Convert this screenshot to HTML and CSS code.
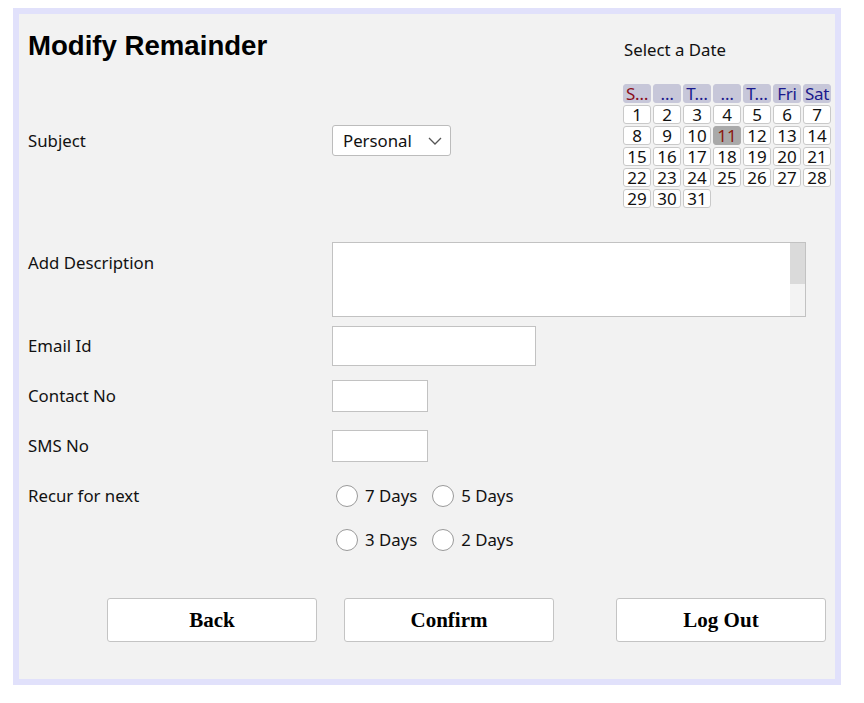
FILE: index.html
```html
<!DOCTYPE html>
<html>
<head>
<meta charset="utf-8">
<title>Modify Remainder</title>
<link rel="stylesheet" href="styles.css">
</head>
<body>
<div class="frame">
  <div class="top">
    <div class="top-left">
      <h1 class="title">Modify Remainder</h1>
      <div class="row row-subject">
        <label class="label">Subject</label>
        <div class="select-wrap">
          <select class="select"><option>Personal</option><option>Official</option></select>
          <svg class="chev" width="14" height="8" viewBox="0 0 14 8"><path d="M1 1 L7 7 L13 1" fill="none" stroke="#555" stroke-width="1.3"/></svg>
        </div>
      </div>
    </div>
    <div class="top-right">
      <div class="cal-title">Select a Date</div>
      <div class="cal">
        <div class="hd sun">S…</div><div class="hd">…</div><div class="hd">T…</div><div class="hd">…</div><div class="hd">T…</div><div class="hd">Fri</div><div class="hd">Sat</div>
        <div class="d">1</div><div class="d">2</div><div class="d">3</div><div class="d">4</div><div class="d">5</div><div class="d">6</div><div class="d">7</div>
        <div class="d">8</div><div class="d">9</div><div class="d">10</div><div class="d today">11</div><div class="d">12</div><div class="d">13</div><div class="d">14</div>
        <div class="d">15</div><div class="d">16</div><div class="d">17</div><div class="d">18</div><div class="d">19</div><div class="d">20</div><div class="d">21</div>
        <div class="d">22</div><div class="d">23</div><div class="d">24</div><div class="d">25</div><div class="d">26</div><div class="d">27</div><div class="d">28</div>
        <div class="d">29</div><div class="d">30</div><div class="d">31</div>
      </div>
    </div>
  </div>

  <div class="row row-desc">
    <label class="label label-top">Add Description</label>
    <textarea class="textarea"></textarea>
  </div>
  <div class="row row-email">
    <label class="label">Email Id</label>
    <input class="input input-email" type="text">
  </div>
  <div class="row row-contact">
    <label class="label">Contact No</label>
    <input class="input input-small" type="text">
  </div>
  <div class="row row-sms">
    <label class="label">SMS No</label>
    <input class="input input-small" type="text">
  </div>
  <div class="row row-recur">
    <label class="label">Recur for next</label>
    <div class="radios">
      <label class="radio"><span class="circle"></span>7 Days</label>
      <label class="radio"><span class="circle"></span>5 Days</label>
    </div>
  </div>
  <div class="row row-recur2">
    <span class="label"></span>
    <div class="radios">
      <label class="radio"><span class="circle"></span>3 Days</label>
      <label class="radio"><span class="circle"></span>2 Days</label>
    </div>
  </div>
  <div class="buttons">
    <button class="btn">Back</button>
    <button class="btn btn-confirm">Confirm</button>
    <button class="btn btn-logout">Log Out</button>
  </div>
</div>
</body>
</html>
```
FILE: styles.css
```css
html, body {
  margin: 0;
  padding: 0;
  background: #ffffff;
}
body {
  padding: 8px 0 0 13px;
  font-family: "Noto Sans", "Open Sans", sans-serif;
  font-size: 17px;
  color: #111;
}
.frame {
  box-sizing: border-box;
  width: 828px;
  height: 677px;
  border: 6px solid #e1e1fb;
  background: #f2f2f2;
  padding: 16px 0 0 9px;
}
.top {
  display: flex;
}
.top-left {
  width: 595px;
}
.title {
  margin: 0;
  font-family: "Liberation Sans", Arial, sans-serif;
  font-weight: bold;
  font-size: 27.6px;
  line-height: 32px;
  color: #000;
}
.row {
  display: flex;
  align-items: center;
}
.label {
  width: 304px;
  flex: none;
  font-size: 16.8px;
  line-height: 22px;
  color: #111;
}
.row-subject {
  margin-top: 63px;
}
.select-wrap {
  position: relative;
  width: 119px;
  height: 31px;
}
.select {
  appearance: none;
  -webkit-appearance: none;
  width: 119px;
  height: 31px;
  border: 1px solid #bcbcbc;
  border-radius: 3px;
  background: #fff;
  font-family: inherit;
  font-size: 16.8px;
  color: #111;
  padding: 0 0 0 10px;
  margin: 0;
}
.chev {
  position: absolute;
  right: 9px;
  top: 12px;
  pointer-events: none;
}
.top-right {
  padding-top: 9px;
}
.cal-title {
  font-size: 16.8px;
  line-height: 22px;
  padding-left: 1px;
  color: #111;
}
.cal {
  margin-top: 23px;
  display: grid;
  grid-template-columns: repeat(7, 28px);
  grid-auto-rows: 19px;
  gap: 2px;
}
.cal > div {
  box-sizing: border-box;
  border-radius: 3px;
  text-align: center;
  font-size: 17px;
  line-height: 17px;
  white-space: nowrap;
}
.hd {
  background: #c7c7d9;
  color: #1a1a8c;
  border: 1px solid #c7c7d9;
  letter-spacing: -0.3px;
}
.hd.sun {
  color: #8b0f1a;
}
.d {
  background: #fff;
  border: 1px solid #c9c9c9;
  color: #111;
}
.d.today {
  background: #a9a9a9;
  border-color: #a9a9a9;
  color: #8b1a10;
}
.row-desc {
  margin-top: 34px;
  align-items: flex-start;
}
.label-top {
  padding-top: 10px;
}
.textarea {
  box-sizing: border-box;
  width: 474px;
  height: 75px;
  margin: 0;
  border: 1px solid #c2c2c2;
  resize: none;
  background:
    linear-gradient(#dadada, #dadada) right top / 15px 41px no-repeat,
    linear-gradient(#f3f3f3, #f3f3f3) right top / 15px 100% no-repeat,
    #fff;
  outline: none;
}
.input {
  box-sizing: border-box;
  margin: 0;
  border: 1px solid #c2c2c2;
  background: #fff;
  outline: none;
}
.row-email {
  margin-top: 9px;
}
.input-email {
  width: 204px;
  height: 40px;
}
.row-contact {
  margin-top: 14px;
}
.input-small {
  width: 96px;
  height: 32px;
}
.row-sms {
  margin-top: 18px;
}
.row-recur {
  margin-top: 23px;
}
.row-recur2 {
  margin-top: 22px;
}
.radios {
  display: flex;
  align-items: center;
  padding-left: 4px;
}
.radio {
  display: flex;
  align-items: center;
  gap: 7px;
  margin-right: 15px;
  font-size: 16.8px;
  line-height: 22px;
  color: #111;
}
.circle {
  box-sizing: border-box;
  width: 22px;
  height: 22px;
  border: 1.5px solid #9a9a9a;
  border-radius: 50%;
  background: #fff;
}
.buttons {
  display: flex;
  margin-top: 47px;
  padding-left: 79px;
}
.btn {
  box-sizing: border-box;
  width: 210px;
  height: 44px;
  margin: 0;
  background: #fff;
  border: 1px solid #c4c4c4;
  border-radius: 3px;
  font-family: "Liberation Serif", "Times New Roman", serif;
  font-weight: bold;
  font-size: 21px;
  color: #000;
}
.btn-confirm {
  margin-left: 27px;
}
.btn-logout {
  margin-left: 62px;
}
```
